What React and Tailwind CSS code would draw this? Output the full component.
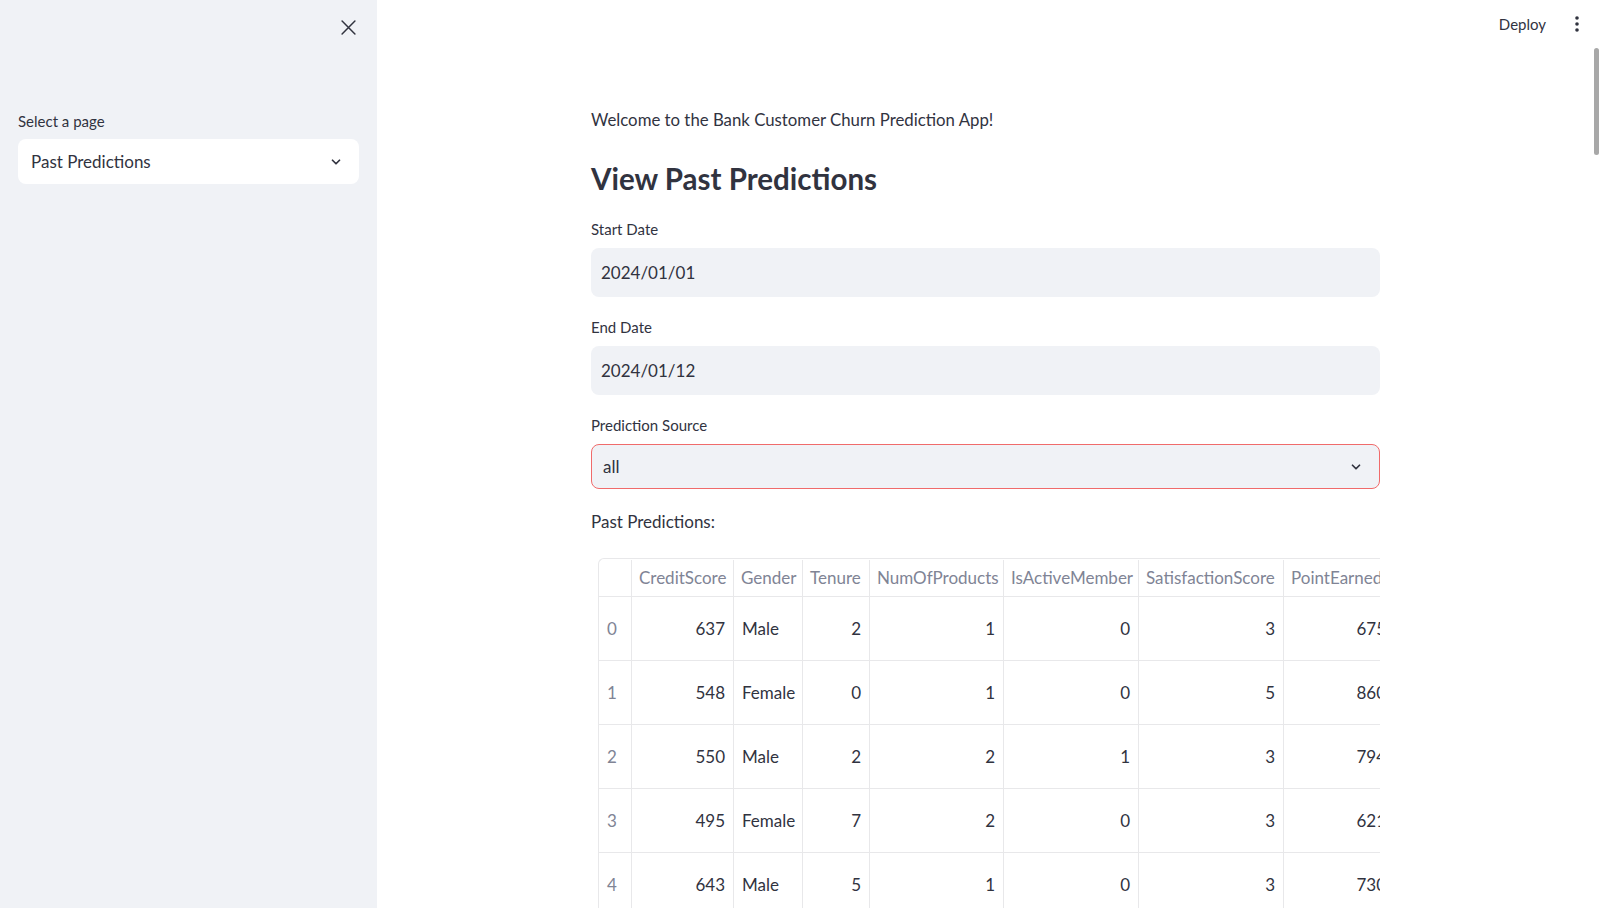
import * as React from "react";

const columns = [
  { name: "", w: 33 },
  { name: "CreditScore", w: 102 },
  { name: "Gender", w: 69 },
  { name: "Tenure", w: 67 },
  { name: "NumOfProducts", w: 134 },
  { name: "IsActiveMember", w: 135 },
  { name: "SatisfactionScore", w: 145 },
  { name: "PointEarned", w: 111 },
];

const rows = [
  ["0", "637", "Male", "2", "1", "0", "3", "675"],
  ["1", "548", "Female", "0", "1", "0", "5", "860"],
  ["2", "550", "Male", "2", "2", "1", "3", "794"],
  ["3", "495", "Female", "7", "2", "0", "3", "621"],
  ["4", "643", "Male", "5", "1", "0", "3", "730"],
];

function Chevron() {
  return (
    <svg width="14" height="14" viewBox="0 0 24 24" fill="none" stroke="#31333f" strokeWidth="3" strokeLinecap="round" strokeLinejoin="round">
      <path d="M6 9l6 6 6-6" />
    </svg>
  );
}

function Label({ children }) {
  return <div className="text-[15px] leading-[21px] text-[#31333f]">{children}</div>;
}

function DataTable() {
  return (
    <div className="ml-[7px] mt-[23px] overflow-hidden border-l border-t border-[#e8e8ea] rounded-tl-[6px]">
      <div className="flex h-[38px] pt-[1px] border-b border-[#e8e8ea]">
        {columns.map((c, i) => (
          <div
            key={i}
            style={{ width: c.w }}
            className="shrink-0 flex items-center px-[7px] border-r border-[#e8e8ea] text-[17px] text-[#808495] whitespace-nowrap overflow-hidden"
          >
            {c.name}
          </div>
        ))}
      </div>
      {rows.map((r, ri) => (
        <div key={ri} className="flex h-[64px] border-b border-[#e8e8ea]">
          {r.map((v, ci) => (
            <div
              key={ci}
              style={{ width: columns[ci].w }}
              className={
                "shrink-0 flex items-center px-[8px] border-r border-[#e8e8ea] text-[17px] whitespace-nowrap " +
                (ci === 0
                  ? "text-[#808495] justify-start"
                  : ci === 2
                  ? "text-[#31333f] justify-start"
                  : "text-[#31333f] justify-end")
              }
            >
              {v}
            </div>
          ))}
        </div>
      ))}
    </div>
  );
}

export default function App() {
  return (
    <div
      className="flex h-[908px] w-full overflow-hidden bg-white text-[#31333f]"
      style={{ fontFamily: "Lato, 'Noto Sans', sans-serif" }}
    >
      <aside className="w-[377px] shrink-0 bg-[#f0f2f6] px-[18px]">
        <div className="flex justify-end pt-[20px] pr-[3px]">
          <svg width="15" height="15" viewBox="0 0 14 14" fill="none" stroke="#31333f" strokeWidth="1.4" strokeLinecap="round">
            <path d="M1 1l12 12M13 1L1 13" />
          </svg>
        </div>
        <div className="mt-[76px] text-[15px] leading-[21px]">Select a page</div>
        <div className="mt-[7px] h-[45px] rounded-[8px] bg-white flex items-center justify-between pl-[13px] pr-[16px]">
          <span className="text-[17px]">Past Predictions</span>
          <Chevron />
        </div>
      </aside>

      <main className="relative flex-1 flex flex-col">
        <div className="h-[48px] flex items-center justify-end pr-[21px] gap-[29px] shrink-0">
          <span className="text-[15px]">Deploy</span>
          <svg width="4" height="16" viewBox="0 0 4 16" fill="#31333f">
            <circle cx="2" cy="2" r="1.8" />
            <circle cx="2" cy="8" r="1.8" />
            <circle cx="2" cy="14" r="1.8" />
          </svg>
        </div>
        <div className="absolute right-[1px] top-[48px] h-[107px] w-[5px] rounded-full bg-[#a8a8a8]" />

        <div className="ml-[214px] w-[789px] flex flex-col">
          <p className="mt-[58px] text-[16.8px] leading-[27px]">
            Welcome to the Bank Customer Churn Prediction App!
          </p>
          <h1 className="mt-[28px] text-[29.5px] leading-[36px] font-bold">View Past Predictions</h1>

          <div className="mt-[22px]">
            <Label>Start Date</Label>
          </div>
          <div className="mt-[8px] h-[49px] rounded-[8px] bg-[#f0f2f6] flex items-center px-[10px] text-[17px]">
            2024/01/01
          </div>

          <div className="mt-[20px]">
            <Label>End Date</Label>
          </div>
          <div className="mt-[8px] h-[49px] rounded-[8px] bg-[#f0f2f6] flex items-center px-[10px] text-[17px]">
            2024/01/12
          </div>

          <div className="mt-[20px]">
            <Label>Prediction Source</Label>
          </div>
          <div className="mt-[8px] h-[45px] rounded-[8px] bg-[#f0f2f6] border border-[#f06b6b] flex items-center justify-between pl-[11px] pr-[16px] text-[17px]">
            <span>all</span>
            <Chevron />
          </div>

          <p className="mt-[19px] text-[17px] leading-[27px]">Past Predictions:</p>

          <DataTable />
        </div>
      </main>
    </div>
  );
}
